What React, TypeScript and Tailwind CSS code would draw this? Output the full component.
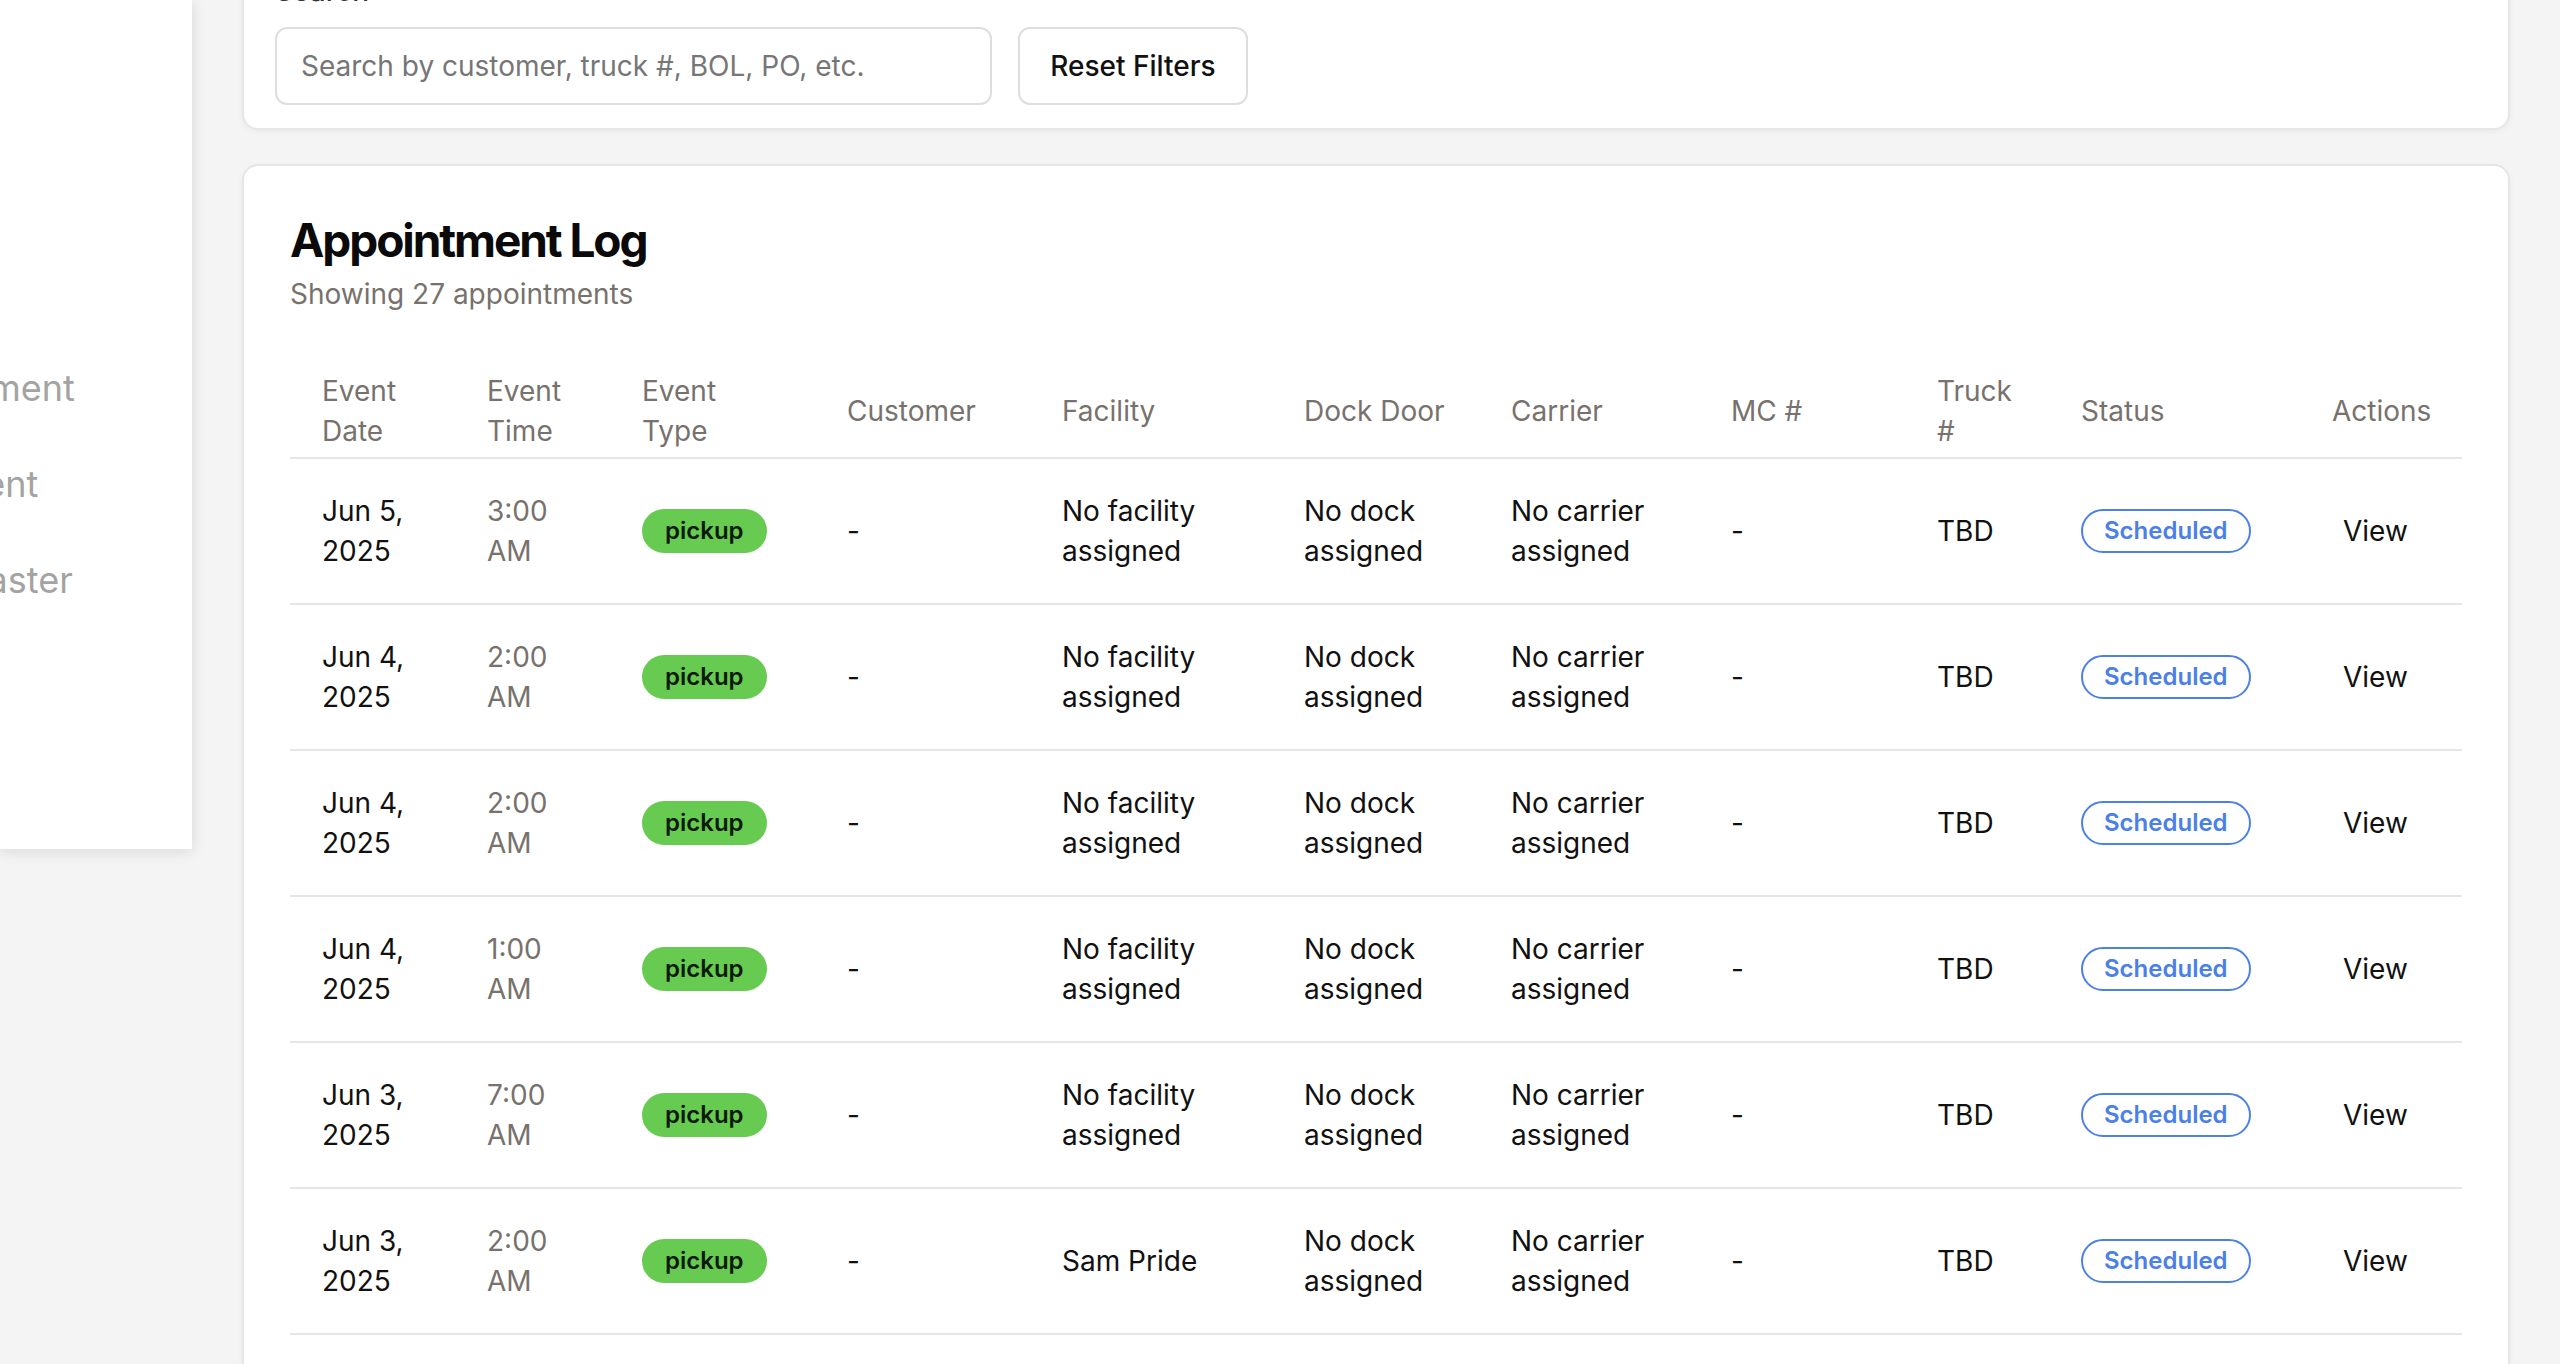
const appointments = [
  { date: "Jun 5, 2025", time: "3:00 AM", facility: "No facility assigned" },
  { date: "Jun 4, 2025", time: "2:00 AM", facility: "No facility assigned" },
  { date: "Jun 4, 2025", time: "2:00 AM", facility: "No facility assigned" },
  { date: "Jun 4, 2025", time: "1:00 AM", facility: "No facility assigned" },
  { date: "Jun 3, 2025", time: "7:00 AM", facility: "No facility assigned" },
  { date: "Jun 3, 2025", time: "2:00 AM", facility: "Sam Pride" },
  { date: "Jun 2, 2025", time: "9:00 AM", facility: "No facility assigned" },
  { date: "Jun 2, 2025", time: "6:00 AM", facility: "No facility assigned" },
];

const columns = [
  { label: ["Event", "Date"], width: "w-[165px]" },
  { label: ["Event", "Time"], width: "w-[155px]" },
  { label: ["Event", "Type"], width: "w-[205px]" },
  { label: ["Customer"], width: "w-[215px]" },
  { label: ["Facility"], width: "w-[242px]" },
  { label: ["Dock Door"], width: "w-[207px]" },
  { label: ["Carrier"], width: "w-[220px]" },
  { label: ["MC #"], width: "w-[206px]" },
  { label: ["Truck", "#"], width: "w-[144px]" },
  { label: ["Status"], width: "w-[251px]" },
  { label: ["Actions"], width: "w-[162px]" },
];

// drawer is slid mostly out of view, only the word endings show
const navItems = ["Appointment", "Equipment", "Dock Master"];

const App = () => {
  const td = "px-[32px] py-[32px] align-middle border-b-2 border-[#e5e5e5]";

  return (
    <div className="flex h-screen overflow-hidden bg-[#f4f4f4] text-[#111] [font-family:Inter,'Noto_Sans',sans-serif]">
      <aside className="relative z-10 w-[192px] h-[849px] shrink-0 overflow-hidden bg-white shadow-[0_2px_14px_rgba(0,0,0,0.12)]">
        <nav className="-ml-[143px] pt-[364px] flex flex-col gap-[48px] whitespace-nowrap text-[36px] leading-[48px] text-[#a3a3a3]">
          {navItems.map((item) => (
            <span key={item}>{item}</span>
          ))}
        </nav>
      </aside>

      <main className="flex-1 px-[50px] -mt-[77px]">
        {/* Filters card */}
        <section className="bg-white border-2 border-[#e6e6e6] rounded-[16px] shadow-[0_2px_6px_rgba(0,0,0,0.04)] px-[31px] pt-[46px] pb-[23px]">
          <label className="block mb-[16px] text-[28px] leading-[40px] font-medium text-[#333]">Search</label>
          <div className="flex items-center gap-[26px]">
            <input
              placeholder="Search by customer, truck #, BOL, PO, etc."
              className="w-[717px] h-[78px] rounded-[12px] border-2 border-[#dedede] px-[24px] text-[28px] text-[#111] placeholder:text-[#767676] outline-none"
            />
            <button className="w-[230px] h-[78px] rounded-[12px] border-2 border-[#dedede] bg-white text-[28px] font-medium text-[#111]">
              Reset Filters
            </button>
          </div>
        </section>

        {/* Appointment log card */}
        <section className="mt-[34px] bg-white border-2 border-[#e6e6e6] rounded-[16px] shadow-[0_2px_6px_rgba(0,0,0,0.04)] px-[46px] pt-[50px] pb-[46px]">
          <h2 className="text-[46px] leading-[48px] font-bold tracking-[-0.045em] text-[#0a0a0a]">Appointment Log</h2>
          <p className="mt-[10px] text-[28px] leading-[40px] text-[#77726d]">Showing 27 appointments</p>

          <table className="mt-[41px] w-full table-fixed border-collapse text-[28px] leading-[40px]">
            <colgroup>
              {columns.map((c) => (
                <col key={c.label.join(" ")} className={c.width} />
              ))}
            </colgroup>
            <thead>
              <tr>
                {columns.map((c) => (
                  <th
                    key={c.label.join(" ")}
                    className="px-[32px] pt-[16px] pb-[6px] text-left align-middle font-normal text-[#77726d] whitespace-nowrap border-b-2 border-[#e5e5e5]"
                  >
                    {c.label.map((line, i) => (
                      <span key={i} className="block">
                        {line}
                      </span>
                    ))}
                  </th>
                ))}
              </tr>
            </thead>
            <tbody>
              {appointments.map((a, index) => (
                <tr key={index}>
                  <td className={td}>{a.date}</td>
                  <td className={`${td} text-[#77726d]`}>{a.time}</td>
                  <td className={td}>
                    <span className="inline-block rounded-full bg-[#67cb51] px-[23px] py-[6px] text-[24px] leading-[32px] font-semibold text-[#0d1a0a]">
                      pickup
                    </span>
                  </td>
                  <td className={td}>-</td>
                  <td className={td}>{a.facility}</td>
                  <td className={td}>No dock assigned</td>
                  <td className={td}>No carrier assigned</td>
                  <td className={td}>-</td>
                  <td className={td}>TBD</td>
                  <td className={td}>
                    <span className="inline-block rounded-full border-2 border-[#4a80e8] px-[21px] py-[4px] text-[24px] leading-[32px] font-semibold text-[#4a80e8]">
                      Scheduled
                    </span>
                  </td>
                  <td className={td}>
                    <button className="px-[11px] text-[28px] leading-[40px] text-[#111]">View</button>
                  </td>
                </tr>
              ))}
            </tbody>
          </table>
        </section>
      </main>
    </div>
  );
};

export default App;
